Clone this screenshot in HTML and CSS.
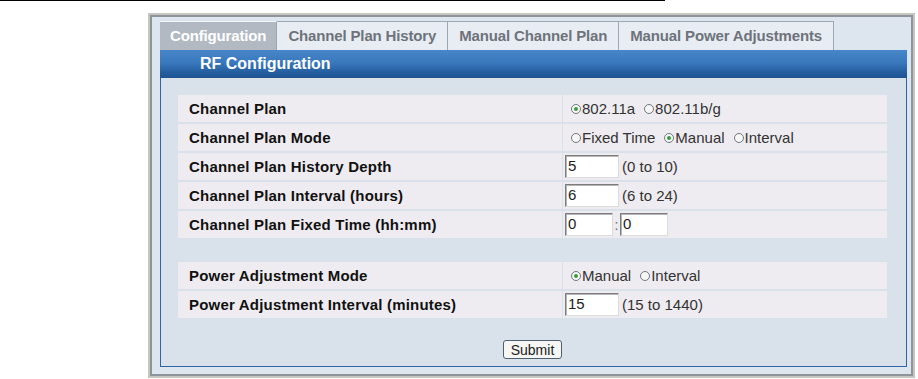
FILE: index.html
```html
<!DOCTYPE html>
<html>
<head>
<meta charset="utf-8">
<link rel="stylesheet" href="styles.css">
</head>
<body>
<div class="rule"></div>
<div class="frame">
  <div class="tabs">
    <div class="tab active">Configuration</div>
    <div class="tab">Channel Plan History</div>
    <div class="tab">Manual Channel Plan</div>
    <div class="tab">Manual Power Adjustments</div>
  </div>
  <div class="box">
    <div class="header">RF Configuration</div>
    <div class="content">
      <div class="rows">
        <div class="row">
          <div class="label">Channel Plan</div>
          <div class="value">
            <span class="opt"><span class="radio checked"></span>802.11a</span>
            <span class="opt"><span class="radio"></span>802.11b/g</span>
          </div>
        </div>
        <div class="row">
          <div class="label">Channel Plan Mode</div>
          <div class="value">
            <span class="opt"><span class="radio"></span>Fixed Time</span>
            <span class="opt"><span class="radio checked"></span>Manual</span>
            <span class="opt"><span class="radio"></span>Interval</span>
          </div>
        </div>
        <div class="row">
          <div class="label">Channel Plan History Depth</div>
          <div class="value"><span class="input">5</span><span class="hint">(0 to 10)</span></div>
        </div>
        <div class="row">
          <div class="label">Channel Plan Interval (hours)</div>
          <div class="value"><span class="input">6</span><span class="hint">(6 to 24)</span></div>
        </div>
        <div class="row">
          <div class="label">Channel Plan Fixed Time (hh:mm)</div>
          <div class="value"><span class="input small">0</span><span class="colon">:</span><span class="input small">0</span></div>
        </div>
        <div class="spacer"></div>
        <div class="row">
          <div class="label">Power Adjustment Mode</div>
          <div class="value">
            <span class="opt"><span class="radio checked"></span>Manual</span>
            <span class="opt"><span class="radio"></span>Interval</span>
          </div>
        </div>
        <div class="row">
          <div class="label">Power Adjustment Interval (minutes)</div>
          <div class="value"><span class="input">15</span><span class="hint">(15 to 1440)</span></div>
        </div>
      </div>
      <div class="actions"><button class="submit">Submit</button></div>
    </div>
  </div>
</div>
</body>
</html>
```

FILE: styles.css
```css
html, body {
  margin: 0;
  padding: 0;
  background: #ffffff;
}
body {
  font-family: "Liberation Sans", Arial, sans-serif;
  width: 918px;
  height: 379px;
  overflow: hidden;
}
.rule {
  width: 665px;
  height: 1px;
  background: #000;
}
.frame {
  margin: 12px 0 0 148px;
  width: 767px;
  height: 365px;
  box-sizing: border-box;
  border: 2px solid #c6c6c0;
  box-shadow: inset 0 0 0 2px #8e949a;
  background: #dde5ee;
  padding: 6px 6px 5px 10px;
}
.tabs {
  display: flex;
  height: 29px;
}
.tab {
  box-sizing: border-box;
  height: 29px;
  padding: 0 11px;
  line-height: 28px;
  font-size: 15px;
  font-weight: bold;
  letter-spacing: -0.15px;
  color: #6e737b;
  background: #e8edf3;
  border: 1px solid #9ea6b0;
  border-bottom: none;
  border-left: none;
  white-space: nowrap;
}
.tab.active {
  background: #b2b9c3;
  color: #ffffff;
  border-top: 1px solid #f4f6f8;
  padding: 0 10px;
}
.box {
  border: 1px solid #2e66a4;
  border-top: none;
  background: #d9e1eb;
  height: 317px;
  box-sizing: border-box;
}
.header {
  height: 28px;
  margin: 0 -1px;
  background: linear-gradient(#4786c9 0%, #3a78bd 45%, #245e9f 80%, #1e5290 100%);
  color: #fff;
  font-size: 16px;
  font-weight: bold;
  line-height: 28px;
  padding-left: 40px;
}
.content {
  padding: 17px 18px 0 17px;
}
.rows {
  display: flex;
  flex-direction: column;
  gap: 2px;
}
.row {
  display: grid;
  grid-template-columns: 384px 324px;
  gap: 1px;
  height: 27px;
}
.label, .value {
  background: #eeecf0;
  display: flex;
  align-items: center;
}
.label {
  padding-left: 11px;
  font-size: 15px;
  font-weight: bold;
  letter-spacing: 0.2px;
  color: #111;
}
.value {
  padding-left: 2px;
  font-size: 15px;
  color: #333;
}
.spacer {
  height: 20px;
}
.opt {
  display: inline-flex;
  align-items: center;
  margin-right: 9px;
}
.opt:first-child {
  margin-left: 6px;
}
.radio {
  box-sizing: border-box;
  width: 10px;
  height: 10px;
  border-radius: 50%;
  border: 1px solid #6f7881;
  background: #f7f7f7;
  margin-right: 1px;
  position: relative;
}
.radio.checked::after {
  content: "";
  position: absolute;
  left: 2px;
  top: 2px;
  width: 4px;
  height: 4px;
  border-radius: 50%;
  background: #3c9c3a;
}
.input {
  box-sizing: border-box;
  width: 54px;
  height: 23px;
  background: #fff;
  border: 1px solid;
  border-color: #7d7d7d #dcdcdc #dcdcdc #7d7d7d;
  box-shadow: inset 1px 1px 0 #b5b5b5;
  font-size: 15px;
  line-height: 20px;
  padding-left: 2px;
  color: #222;
}
.input.small {
  width: 48px;
}
.colon {
  width: 7px;
  text-align: center;
  color: #666;
  font-size: 14px;
}
.hint {
  margin-left: 3px;
}
.actions {
  display: flex;
  justify-content: center;
  margin-top: 22px;
  padding-right: 1px;
}
.submit {
  width: 59px;
  height: 19px;
  box-sizing: border-box;
  border: 1px solid #4f5f72;
  border-radius: 3px;
  background: #f6f6f4;
  font-family: "Liberation Sans", Arial, sans-serif;
  font-size: 14px;
  color: #222;
  padding: 0;
  line-height: 16px;
}
```
